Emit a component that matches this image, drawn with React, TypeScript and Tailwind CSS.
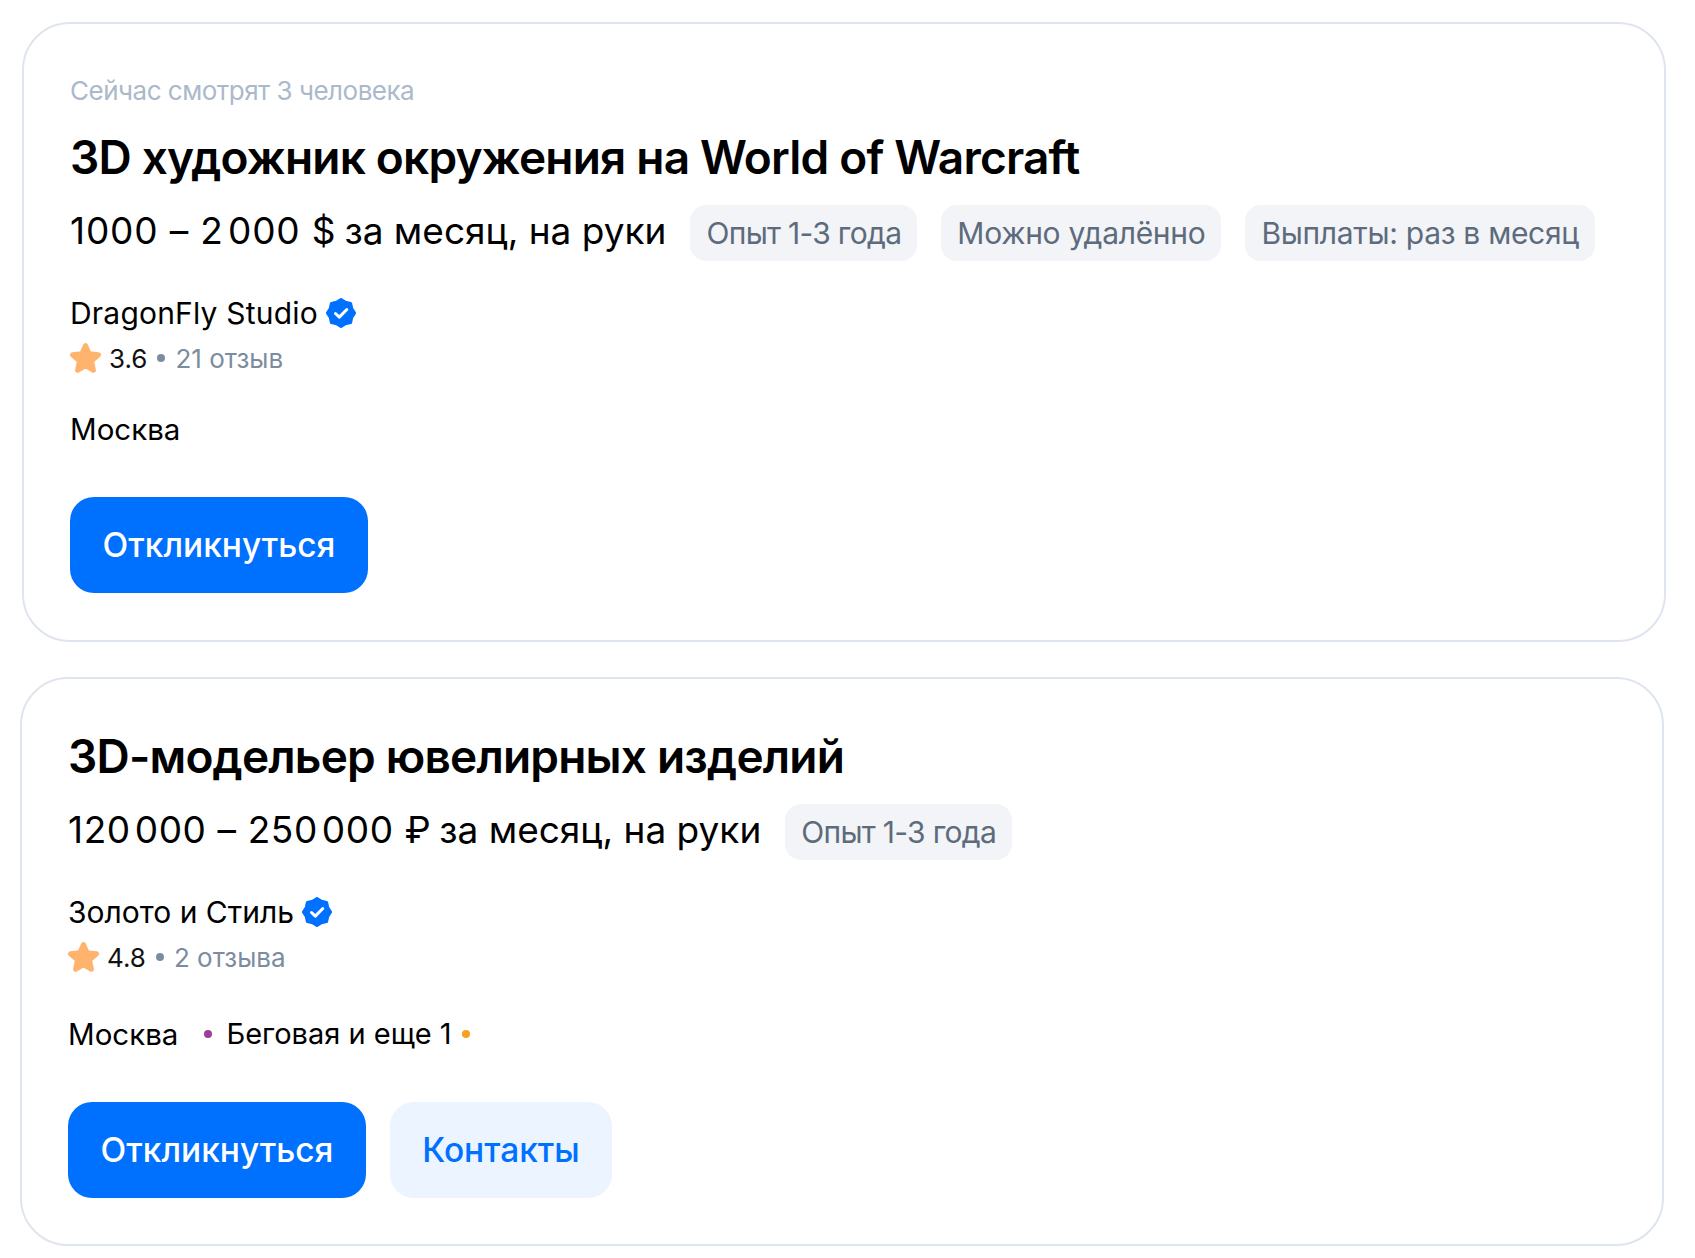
const font = { fontFamily: "Inter, 'Noto Sans', sans-serif" };

const badgePoints = Array.from({ length: 16 }, (_, i) => {
  const r = i % 2 === 0 ? 13.6 : 11.6;
  const a = (i * Math.PI) / 8 - Math.PI / 2;
  return `${(16 + r * Math.cos(a)).toFixed(2)},${(16 + r * Math.sin(a)).toFixed(2)}`;
}).join(" ");

function Badge() {
  return (
    <svg width="32" height="32" viewBox="0 0 32 32" className="shrink-0">
      <polygon points={badgePoints} fill="#0070ff" stroke="#0070ff" strokeWidth="3" strokeLinejoin="round" />
      <path d="M10.500 16.500l3.800 3.600L21.800 12.500" fill="none" stroke="#fff" strokeWidth="3" strokeLinecap="round" strokeLinejoin="round" />
    </svg>
  );
}

function Star() {
  return (
    <svg width="33" height="32" viewBox="0 0 33 32" className="shrink-0">
      <path
        fill="#ffb46e"
        stroke="#ffb46e"
        strokeWidth="5"
        strokeLinejoin="round"
        d="M16.500 3.500l3.700 8.200 9.300 1.100-6.900 6.200 1.800 9.300-7.900-4.600-7.900 4.600 1.800-9.300-6.900-6.200 9.300-1.100z"
      />
    </svg>
  );
}

function Tag({ children }: { children: string }) {
  const tracking = children.startsWith("Опыт") ? "tracking-[-0.7px]" : "tracking-[-0.3px]";
  return (
    <span className={`flex h-14 items-center rounded-2xl bg-[#f2f4f8] px-4 text-[30px] text-[#5d6b7c] ${tracking}`}>
      {children}
    </span>
  );
}

function Card({
  className,
  views,
  title,
  amount,
  amountClass,
  salary,
  tags,
  company,
  companyClass,
  rating,
  reviews,
  location,
  contacts,
}: {
  className: string;
  views?: string;
  title: string;
  amount: string;
  amountClass: string;
  salary: string;
  tags: string[];
  company: string;
  companyClass: string;
  rating: string;
  reviews: string;
  location: React.ReactNode;
  contacts?: boolean;
}) {
  return (
    <section className={`flex w-[1644px] flex-col rounded-[48px] border-2 border-[#dfe5ee] bg-white px-[46px] ${className}`}>
      {views && <div className="mb-[20px] h-[32px] text-[26px] leading-[32px] tracking-[-0.5px] text-[#abb9cb]">{views}</div>}
      <h2 className="h-[60px] text-[46px] leading-[60px] font-semibold tracking-[-0.8px] text-black">{title}</h2>
      <div className="mt-[18px] flex h-14 items-center gap-6">
        <span className="flex gap-[8px] pb-1 text-[37px] leading-[56px] text-black">
          <span className={amountClass}>{amount}</span>
          <span>{salary}</span>
        </span>
        {tags.map((t) => (
          <Tag key={t}>{t}</Tag>
        ))}
      </div>
      <div className={`mt-[32px] flex h-[40px] items-center gap-[7px] text-[30px] text-black ${companyClass}`}>
        {company}
        <Badge />
      </div>
      <div className="mt-[7px] -ml-px flex h-[36px] items-center text-[26px]">
        <Star />
        <span className="ml-[7px] text-[#111]">{rating}</span>
        <span className="mx-[10px] h-2 w-2 rounded-full bg-[#7c8ca0]" />
        <span className="text-[#7c8ca0]">{reviews}</span>
      </div>
      {location}
      <div className="mt-[50px] flex gap-6">
        <button className="flex h-24 w-[298px] items-center justify-center rounded-3xl bg-[#0070ff] text-[33.500px] font-medium text-white">
          Откликнуться
        </button>
        {contacts && (
          <button className="flex h-24 w-[222px] items-center justify-center rounded-3xl bg-[#ebf4ff] text-[33.500px] font-medium text-[#0070ff]">
            Контакты
          </button>
        )}
      </div>
    </section>
  );
}

export default function App() {
  return (
    <main className="min-h-[1258px] bg-white" style={font}>
      <Card
        className="mt-[22px] ml-[22px] pt-[51px] pb-[47px]"
        views="Сейчас смотрят 3 человека"
        title="3D художник окружения на World of Warcraft"
        amount={"1000 – 2\u200A000 $"}
        amountClass="tracking-[0.85px]"
        salary="за месяц, на руки"
        tags={["Опыт 1-3 года", "Можно удалённо", "Выплаты: раз в месяц"]}
        company="DragonFly Studio"
        companyClass="tracking-[0.2px]"
        rating="3.6"
        reviews="21 отзыв"
        location={<div className="mt-[35px] h-[36px] text-[29.500px] leading-[36px] text-black">Москва</div>}
      />
      <Card
        className="mt-[35px] ml-[20px] pt-[47px] pb-[46px]"
        title="3D-модельер ювелирных изделий"
        amount={"120\u200A000 – 250\u200A000 ₽"}
        amountClass="tracking-[0.6px]"
        salary="за месяц, на руки"
        tags={["Опыт 1-3 года"]}
        company="Золото и Стиль"
        companyClass="tracking-[0px]"
        rating="4.8"
        reviews="2 отзыва"
        contacts
        location={
          <div className="mt-[41px] flex h-[36px] items-center text-[29px] leading-[36px] text-black">
            <span className="text-[29.500px]">Москва</span>
            <span className="mr-[14px] ml-[26px] h-2 w-2 rounded-full bg-[#9c3f98]" />
            <span>Беговая и еще 1</span>
            <span className="ml-[10px] h-2 w-2 rounded-full bg-[#f9a01e]" />
          </div>
        }
      />
    </main>
  );
}
